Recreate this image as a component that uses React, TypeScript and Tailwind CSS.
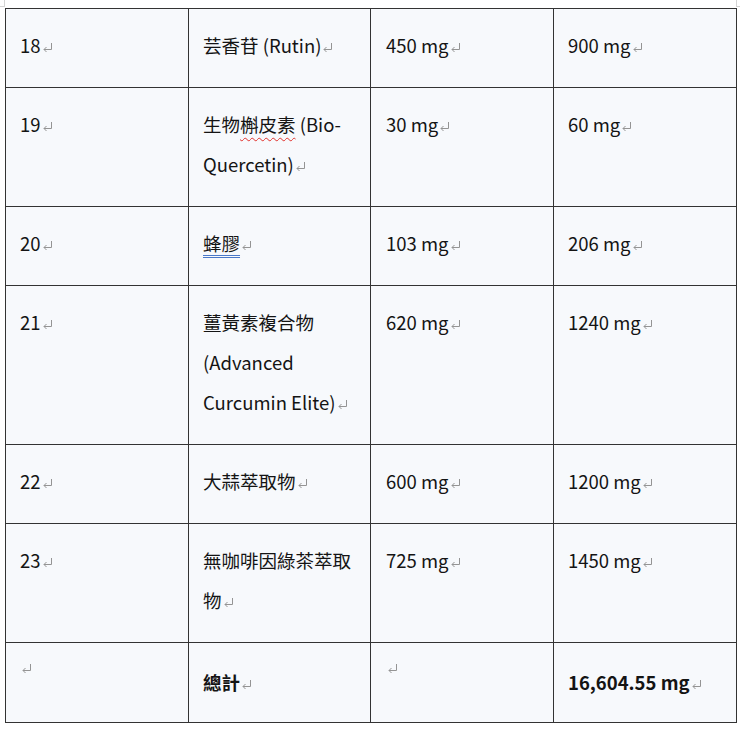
import React from 'react';

interface Row {
  no: string;
  name: React.ReactNode;
  dose: string;
  daily: string;
}

const Mark: React.FC = () => (
  <svg width="11" height="11" viewBox="0 0 11 11" className="inline-block align-baseline ml-[1px]" fill="none" stroke="#949494" strokeWidth="1">
    <path d="M9.5 1 V7.5 H2" />
    <path d="M4.5 5 L2 7.5 L4.5 10" />
  </svg>
);

const rows: Row[] = [
  { no: '18', name: <>芸香苷 (Rutin)<Mark /></>, dose: '450 mg', daily: '900 mg' },
  {
    no: '19',
    name: (
      <>
        生物<span className="underline decoration-wavy decoration-[#e0322c] decoration-1 underline-offset-[5px]">槲皮素</span> (Bio-Quercetin)<Mark />
      </>
    ),
    dose: '30 mg',
    daily: '60 mg',
  },
  {
    no: '20',
    name: (
      <>
        <span className="underline decoration-double decoration-[#4a78c8] decoration-1 underline-offset-[4px]">蜂膠</span><Mark />
      </>
    ),
    dose: '103 mg',
    daily: '206 mg',
  },
  { no: '21', name: <>薑黃素複合物 (Advanced Curcumin Elite)<Mark /></>, dose: '620 mg', daily: '1240 mg' },
  { no: '22', name: <>大蒜萃取物<Mark /></>, dose: '600 mg', daily: '1200 mg' },
  { no: '23', name: <>無咖啡因綠茶萃取物<Mark /></>, dose: '725 mg', daily: '1450 mg' },
];

const cell = 'border border-[#333333] bg-[#f7f9fc] align-top px-[15px] pt-[16px] pb-[22px] leading-[40px]';
const emptyCell = 'border border-[#333333] bg-[#f7f9fc] align-top px-[15px] pt-[3px] pb-[35px] leading-[40px]';
const totalCell = 'border border-[#333333] bg-[#f7f9fc] align-top px-[15px] pt-[19px] pb-[20px] leading-[40px] font-bold';
const endCell = 'align-top pl-[2px] pt-[3px] leading-[40px]';

export default function App() {
  return (
    <div
      className="w-[740px] h-[730px] overflow-hidden bg-white text-[18.5px] text-[#141414]"
      style={{ fontFamily: '"Noto Sans CJK TC", "Noto Sans", sans-serif' }}
    >
      <div className="flex justify-between h-[8px]">
        <div className="w-[5px] h-[7px] border-r border-b border-[#d4d4d4]" />
        <div className="w-[4px] h-[7px] border-l border-b border-[#d4d4d4]" />
      </div>
      <table className="ml-[5px] w-[743px] min-w-[743px] border-collapse table-fixed">
        <colgroup>
          <col className="w-[183px]" />
          <col className="w-[182px]" />
          <col className="w-[183px]" />
          <col className="w-[183px]" />
          <col className="w-[12px]" />
        </colgroup>
        <tbody>
          {rows.map((r) => (
            <tr key={r.no}>
              <td className={`${cell} pl-[14px]`}>{r.no}<Mark /></td>
              <td className={`${cell} pl-[14px]`}>{r.name}</td>
              <td className={cell}>{r.dose}<Mark /></td>
              <td className={`${cell} pl-[14px]`}>{r.daily}<Mark /></td>
              <td className={endCell}><Mark /></td>
            </tr>
          ))}
          <tr>
            <td className={`${emptyCell} pl-[14px]`}><Mark /></td>
            <td className={`${totalCell} pl-[14px]`}>總計<Mark /></td>
            <td className={emptyCell}><Mark /></td>
            <td className={`${totalCell} pl-[14px]`}>16,604.55 mg<Mark /></td>
            <td className={endCell}><Mark /></td>
          </tr>
        </tbody>
      </table>
    </div>
  );
}
